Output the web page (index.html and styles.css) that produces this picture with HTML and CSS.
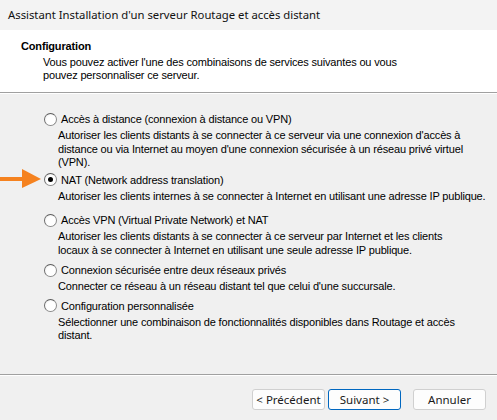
FILE: index.html
```html
<!DOCTYPE html>
<html lang="fr">
<head>
<meta charset="utf-8">
<title>Assistant Installation d'un serveur Routage et accès distant</title>
<link rel="stylesheet" href="styles.css">
</head>
<body>
<div class="window">
  <div class="titlebar">Assistant Installation d'un serveur Routage et accès distant</div>
  <div class="header">
    <div class="h-title">Configuration</div>
    <div class="h-sub">Vous pouvez activer l'une des combinaisons de services suivantes ou vous<br>pouvez personnaliser ce serveur.</div>
  </div>
  <div class="content">
    <svg class="arrow" width="42" height="22" viewBox="0 0 42 22">
      <rect x="0" y="8" width="24" height="4" fill="#f5821f"/>
      <polygon points="22,0 41,10 22,19" fill="#f5821f"/>
    </svg>
    <div class="options">
      <div class="option">
        <div class="opt-label"><span class="radio"></span>Accès à distance (connexion à distance ou VPN)</div>
        <div class="desc">Autoriser les clients distants à se connecter à ce serveur via une connexion d'accès à<br>distance ou via Internet au moyen d'une connexion sécurisée à un réseau privé virtuel<br>(VPN).</div>
      </div>
      <div class="option opt-nat">
        <div class="opt-label"><span class="radio checked"></span>NAT (Network address translation)</div>
        <div class="desc">Autoriser les clients internes à se connecter à Internet en utilisant une adresse IP publique.</div>
      </div>
      <div class="option opt-vpn">
        <div class="opt-label"><span class="radio"></span>Accès VPN (Virtual Private Network) et NAT</div>
        <div class="desc">Autoriser les clients distants à se connecter à ce serveur par Internet et les clients<br>locaux à se connecter à Internet en utilisant une seule adresse IP publique.</div>
      </div>
      <div class="option opt-sec">
        <div class="opt-label"><span class="radio"></span>Connexion sécurisée entre deux réseaux privés</div>
        <div class="desc">Connecter ce réseau à un réseau distant tel que celui d'une succursale.</div>
      </div>
      <div class="option opt-cfg">
        <div class="opt-label"><span class="radio"></span>Configuration personnalisée</div>
        <div class="desc">Sélectionner une combinaison de fonctionnalités disponibles dans Routage et accès<br>distant.</div>
      </div>
    </div>
  </div>
  <div class="footer">
    <div class="btn-pair">
      <button class="btn">&lt; Précédent</button>
      <button class="btn btn-default">Suivant &gt;</button>
    </div>
    <button class="btn">Annuler</button>
  </div>
</div>
</body>
</html>
```
FILE: styles.css
```css
* { box-sizing: border-box; }
html, body { margin: 0; padding: 0; }
body {
  width: 497px;
  height: 420px;
  background: #f0f0f0;
  font-family: "Liberation Sans", Arial, sans-serif;
  font-size: 11px;
  letter-spacing: -0.16px;
  color: #000;
  overflow: hidden;
}
.window {
  display: flex;
  flex-direction: column;
  height: 420px;
}
.titlebar {
  height: 30px;
  flex: none;
  background: #f3f3f3;
  padding-left: 8px;
  font-family: "Noto Sans", "Open Sans", sans-serif;
  font-size: 11.3px;
  letter-spacing: 0;
  line-height: 30px;
  color: #111;
  white-space: nowrap;
}
.header {
  height: 63px;
  flex: none;
  background: #fff;
  border-bottom: 1px solid #a0a0a0;
  box-shadow: 0 1px 0 #fff;
  padding: 10px 0 0 21px;
}
.h-title {
  font-weight: bold;
  line-height: 13px;
}
.h-sub {
  margin: 3px 0 0 22px;
  line-height: 13px;
  white-space: nowrap;
}
.content {
  flex: 1;
  position: relative;
  padding: 17px 0 0 44px;
  margin-top: 1px;
}
.arrow {
  position: absolute;
  left: 0;
  top: 75px;
}
.options {
  display: flex;
  flex-direction: column;
}
.opt-label {
  display: flex;
  align-items: center;
  gap: 4px;
  line-height: 16px;
  white-space: nowrap;
}
.radio {
  width: 13px;
  height: 13px;
  flex: none;
  border-radius: 50%;
  border: 1px solid #8a8a8a;
  border-top-color: #5a5a5a;
  border-left-color: #6a6a6a;
  background: radial-gradient(circle at 60% 60%, #fff 0, #fff 50%, #e8e8e8 100%);
  display: flex;
  align-items: center;
  justify-content: center;
}
.radio.checked::after {
  content: "";
  width: 5px;
  height: 5px;
  border-radius: 50%;
  background: #000;
}
.desc {
  margin: 2px 0 0 14px;
  line-height: 13.5px;
  white-space: nowrap;
}
.opt-nat { margin-top: 2px; }
.opt-vpn { margin-top: 9px; }
.opt-sec { margin-top: 5px; }
.opt-cfg { margin-top: 4px; }
.footer {
  height: 46px;
  flex: none;
  border-top: 1px solid #a0a0a0;
  box-shadow: inset 0 1px 0 #fff;
  display: flex;
  justify-content: flex-end;
  align-items: flex-start;
  gap: 12px;
  padding: 14px 11px 0 0;
}
.btn-pair {
  display: flex;
  gap: 3px;
}
.btn {
  width: 73px;
  height: 21px;
  padding: 0;
  border: 1px solid #d0d0d0;
  border-radius: 3px;
  background: #fdfdfd;
  font-family: "Noto Sans", "Open Sans", sans-serif;
  font-size: 11.5px;
  letter-spacing: 0;
  color: #1a1a1a;
  line-height: 19px;
}
.btn-default {
  border-color: #0067c0;
}
```
